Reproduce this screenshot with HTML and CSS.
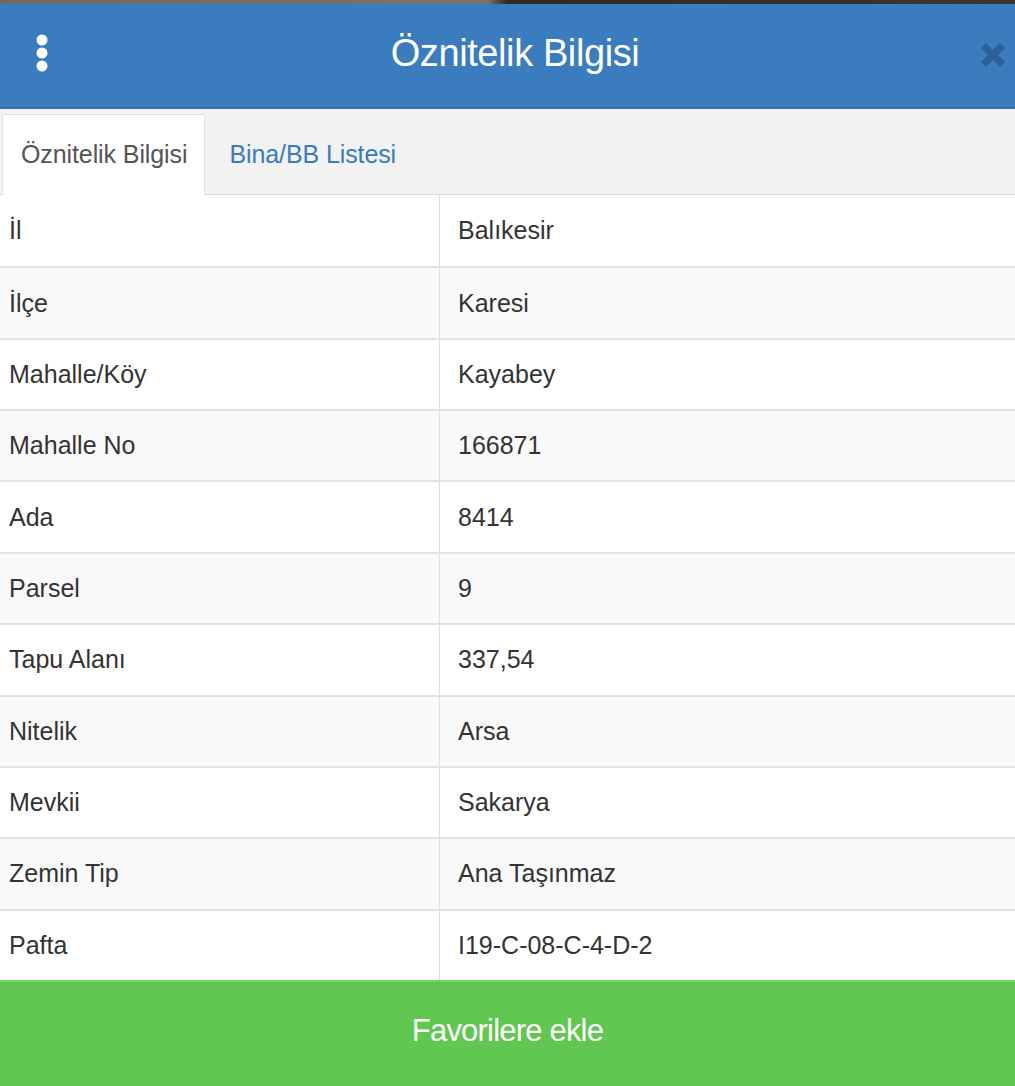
FILE: index.html
```html
<!DOCTYPE html>
<html lang="tr">
<head>
  <meta charset="UTF-8">
  <meta name="viewport" content="width=device-width, initial-scale=1">
  <title>Öznitelik Bilgisi</title>
  <link rel="stylesheet" href="styles.css">
</head>

<body>
  <div class="topstrip"></div>

  <div class="panel">
    <div class="panel-head">
      <svg class="menu-btn" width="14" height="40" viewBox="0 0 14 40">
        <circle cx="7" cy="7" r="5.5" fill="#fff"/>
        <circle cx="7" cy="20" r="5.5" fill="#fff"/>
        <circle cx="7" cy="33" r="5.5" fill="#fff"/>
      </svg>
      <h1>Öznitelik Bilgisi</h1>
      <svg class="close-btn" width="28" height="28" viewBox="0 0 28 28">
        <path d="M2 7 L7 2 L14 9 L21 2 L26 7 L19 14 L26 21 L21 26 L14 19 L7 26 L2 21 L9 14 Z" fill="#2d6196"/>
      </svg>
    </div>

    <div class="tabs">
      <div class="tab active">Öznitelik Bilgisi</div>
      <div class="tab">Bina/BB Listesi</div>
    </div>

    <div class="attr-table">
      <div class="row"><div class="cell key">İl</div><div class="cell val">Balıkesir</div></div>
      <div class="row"><div class="cell key">İlçe</div><div class="cell val">Karesi</div></div>
      <div class="row"><div class="cell key">Mahalle/Köy</div><div class="cell val">Kayabey</div></div>
      <div class="row"><div class="cell key">Mahalle No</div><div class="cell val">166871</div></div>
      <div class="row"><div class="cell key">Ada</div><div class="cell val">8414</div></div>
      <div class="row"><div class="cell key">Parsel</div><div class="cell val">9</div></div>
      <div class="row"><div class="cell key">Tapu Alanı</div><div class="cell val">337,54</div></div>
      <div class="row"><div class="cell key">Nitelik</div><div class="cell val">Arsa</div></div>
      <div class="row"><div class="cell key">Mevkii</div><div class="cell val">Sakarya</div></div>
      <div class="row"><div class="cell key">Zemin Tip</div><div class="cell val">Ana Taşınmaz</div></div>
      <div class="row"><div class="cell key">Pafta</div><div class="cell val">I19-C-08-C-4-D-2</div></div>
    </div>

    <button class="fav-btn">Favorilere ekle</button>
  </div>
</body>
</html>
```

FILE: styles.css
```css
* { margin: 0; padding: 0; box-sizing: border-box; }

body {
  font-family: 'Liberation Sans', Arial, sans-serif;
  background: #fff;
  color: #333;
  width: 1015px;
  height: 1086px;
  overflow: hidden;
}

.topstrip {
  height: 4px;
  background: linear-gradient(to right, #6d6a66 0%, #77736e 48%, #2d2a28 50%, #3a3633 100%);
}

.panel {
  display: flex;
  flex-direction: column;
}

.panel-head {
  height: 105px;
  background: #3a7cbd;
  border-bottom: 2px solid #346fa9;
  display: flex;
  align-items: center;
  justify-content: space-between;
  padding: 0 8px 0 35px;
}

.panel-head h1 {
  flex: 1;
  text-align: center;
  color: #fff;
  font-weight: normal;
  font-size: 38px;
  letter-spacing: -0.4px;
  margin-top: -4px;
  padding-left: 2px;
}

.menu-btn { margin-top: -6px; }

.close-btn { margin-top: -2px; }

.tabs {
  height: 86px;
  background: #f2f2f2;
  border-bottom: 1px solid #dcdcdc;
  display: flex;
  align-items: flex-end;
  padding-left: 2px;
}

.tab {
  height: 81px;
  display: flex;
  align-items: center;
  padding: 0 19px;
  font-size: 25px;
  color: #3a7bbf;
  margin-bottom: -1px;
  letter-spacing: -0.1px;
  white-space: nowrap;
}

.tab.active {
  background: #fff;
  color: #555;
  border: 1px solid #e0e0e0;
  border-bottom-color: #fff;
  padding: 0 17px 0 18px;
}

.tab + .tab { padding-left: 24px; }

.attr-table {
  height: 785px;
  display: grid;
  grid-template-rows: repeat(11, 1fr);
}

.row {
  display: grid;
  grid-template-columns: 439px 1fr;
  border-top: 2px solid #e2e2e2;
}

.row:first-child { border-top: none; }

.row:nth-child(even) { background: #f9f9f9; }

.cell {
  display: flex;
  align-items: center;
  font-size: 25px;
  color: #333;
}

.key { padding-left: 9px; }

.val {
  padding-left: 18px;
  border-left: 1px solid #dedede;
}

.fav-btn {
  height: 106px;
  width: 100%;
  border: none;
  border-top: 2px solid #78d36a;
  background: #60c750;
  color: #fff;
  font-family: 'Liberation Sans', Arial, sans-serif;
  font-size: 31px;
  letter-spacing: -0.8px;
  text-align: center;
  padding-bottom: 6px;
}
```
